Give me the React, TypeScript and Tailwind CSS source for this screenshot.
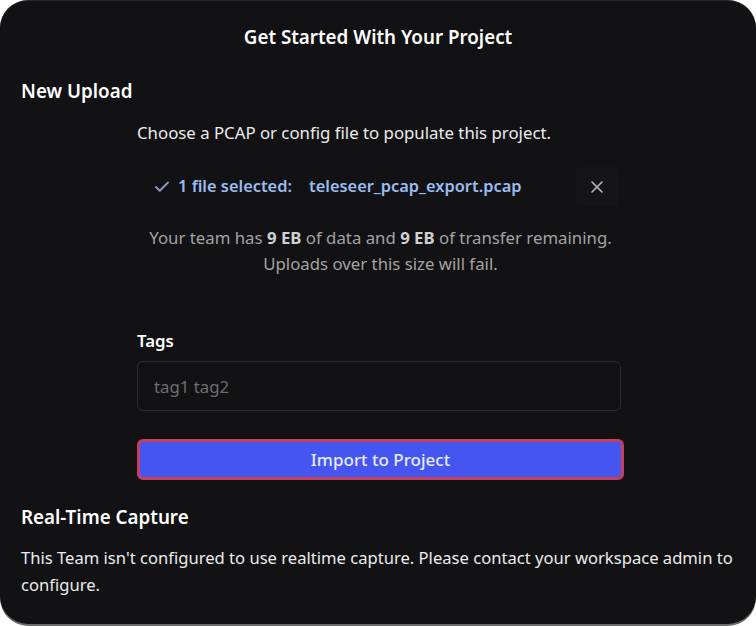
import { Check, X } from "lucide-react";

export default function App() {
  return (
    <div className="h-[626px] w-[756px] bg-white" style={{ fontFamily: '"Noto Sans", sans-serif' }}>
      <div className="flex h-[624px] w-[756px] flex-col rounded-[28px] border-t border-[#2a2a2e] bg-[#121214] px-[21px] text-[16.8px] text-[#ececec] shadow-[0_2px_0_#6b6b6b]">
        <h1 className="pt-[22px] text-center text-[18.8px] font-semibold leading-[28px] text-white">
          Get Started With Your Project
        </h1>

        <h2 className="mt-[26px] text-[18.8px] font-semibold leading-[28px] text-white">New Upload</h2>

        <div className="ml-[116px] flex w-[487px] flex-col">
          <p className="mt-[15px] leading-[26px]">Choose a PCAP or config file to populate this project.</p>

          <div className="mt-[21px] flex items-center pl-[16px] text-[16.4px]">
            <Check className="h-[18px] w-[18px] text-[#8b9bb8]" strokeWidth={2.5} />
            <span className="ml-[7px] font-semibold text-[#9bbcf0]">1 file selected:</span>
            <span className="ml-[17px] font-semibold text-[#9bbcf0]">teleseer_pcap_export.pcap</span>
            <button className="ml-auto mr-[6px] flex h-[39px] w-[42px] items-center justify-center rounded bg-[#151517] text-[#b5b5b5]">
              <X className="h-[20px] w-[20px]" strokeWidth={2} />
            </button>
          </div>

          <p className="mt-[19px] text-center leading-[26px] text-[#a3a3a3]">
            Your team has <b className="text-[#d0d0d0]">9 EB</b> of data and{" "}
            <b className="text-[#d0d0d0]">9 EB</b> of transfer remaining.
            <br />
            Uploads over this size will fail.
          </p>

          <label className="mt-[51px] font-semibold leading-[26px] text-white">Tags</label>
          <input
            className="mt-[7px] h-[50px] w-[484px] rounded-md border border-[#2c2c30] bg-transparent px-[16px] text-[16.8px] text-white outline-none placeholder:text-[#6e6e6e]"
            placeholder="tag1 tag2"
          />

          <button className="mt-[28px] h-[41px] w-[487px] rounded-md border-[3px] border-[#c5405f] bg-[#4555f0] text-[17px] font-medium text-[#e8ebff]">
            Import to Project
          </button>
        </div>

        <h2 className="mt-[23px] text-[18.8px] font-semibold leading-[28px] text-white">Real-Time Capture</h2>
        <p className="-mr-[14px] mt-[13px] text-[16.6px] leading-[27px]">
          This Team isn't configured to use realtime capture. Please contact your workspace admin to configure.
        </p>
      </div>
    </div>
  );
}
